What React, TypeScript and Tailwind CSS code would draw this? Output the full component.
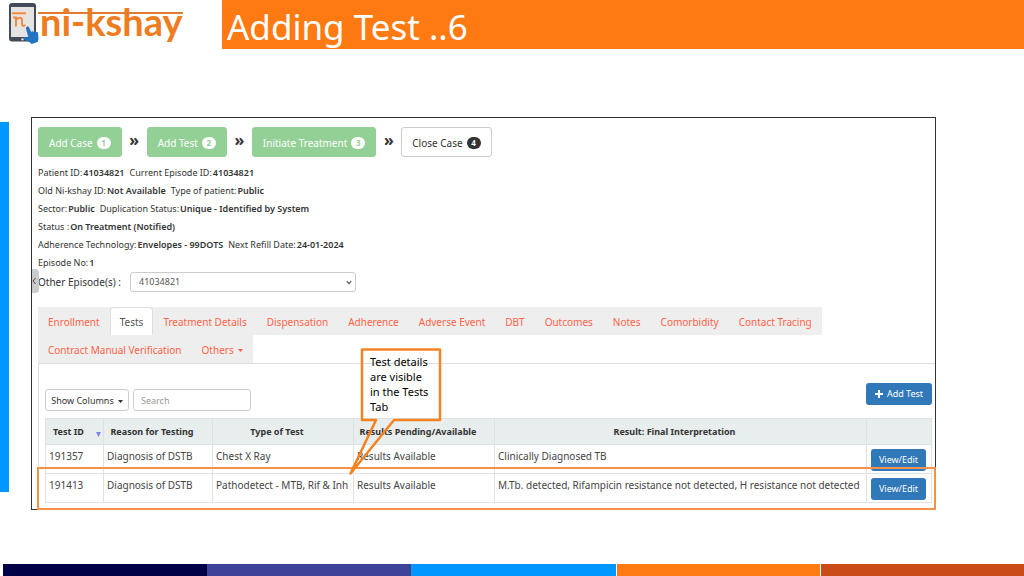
import { ReactNode } from "react";

const steps = [
  { label: "Add Case", n: 1, done: true },
  { label: "Add Test", n: 2, done: true },
  { label: "Initiate Treatment", n: 3, done: true },
  { label: "Close Case", n: 4, done: false },
];

const details = [
  [["Patient ID:", "41034821"], ["Current Episode ID:", "41034821"]],
  [["Old Ni-kshay ID:", "Not Available"], ["Type of patient:", "Public"]],
  [["Sector:", "Public"], ["Duplication Status:", "Unique - Identified by System"]],
  [["Status :", "On Treatment (Notified)"]],
  [["Adherence Technology:", "Envelopes - 99DOTS"], ["Next Refill Date:", "24-01-2024"]],
  [["Episode No:", "1"]],
];

const tabs = [
  "Enrollment",
  "Tests",
  "Treatment Details",
  "Dispensation",
  "Adherence",
  "Adverse Event",
  "DBT",
  "Outcomes",
  "Notes",
  "Comorbidity",
  "Contact Tracing",
  "Contract Manual Verification",
  "Others",
];

const rows = [
  ["191357", "Diagnosis of DSTB", "Chest X Ray", "Results Available", "Clinically Diagnosed TB"],
  [
    "191413",
    "Diagnosis of DSTB",
    "Pathodetect - MTB, Rif & Inh",
    "Results Available",
    "M.Tb. detected, Rifampicin resistance not detected, H resistance not detected",
  ],
];

function Caret() {
  return (
    <svg className="ml-1 inline-block" width="5" height="3" viewBox="0 0 5 3" aria-hidden="true">
      <path d="M0 0h5L2.5 3z" fill="currentColor" />
    </svg>
  );
}

function Logo() {
  return (
    <div className="relative flex h-12 w-[222px] shrink-0 pl-2">
      <svg width="32" height="46" viewBox="0 0 32 46" aria-hidden="true">
        <rect x="1" y="3" width="27" height="38.500" rx="3" fill="#424b57" />
        <rect x="3" y="7" width="23" height="30" fill="#e6e4e2" />
        <circle cx="14.500" cy="39.300" r="1.200" fill="#d8dade" />
        <path
          d="M4 13.300h14M5 17.500h3v9M8 20c2-3 6-3 6 0v4c0 2 1.500 2.500 3.500 1"
          fill="none"
          stroke="#f58a3c"
          strokeWidth="2"
        />
        <path
          d="M18.500 27c1-.9 2.300-.3 2.700.7l2 4.300c.5-1.200 2-1.100 2.500-.1.700-.8 1.800-.5 2.300.3.900-.5 1.800 0 2 1l.4 4.500c.1 2-.2 3.200-.9 4.300l-5.800 2-2.200-1.700-5.500-3c-1.300-1 0-2.600 1.500-2.200l3.100.8-2.700-9.300c-.2-.7 0-1.200.6-1.600z"
          fill="#2374c4"
        />
      </svg>
      <span className="font-[Lato] text-[38px] font-bold leading-[42px] text-[#ee7d22]">ni-kshay</span>
      <span className="absolute left-[38px] top-3 h-[2px] w-[145px] bg-[#e27a30]" />
    </div>
  );
}

function BlueButton({ children, className }: { children: ReactNode; className: string }) {
  return (
    <button className={`items-center justify-center rounded-[3px] bg-[#3078b7] text-[9px] text-white ${className}`}>
      {children}
    </button>
  );
}

export default function App() {
  return (
    <div className="flex min-h-screen flex-col bg-white font-['Noto_Sans',sans-serif] text-[#333]">
      <header className="flex h-[49px]">
        <Logo />
        <h1 className="flex-1 bg-[#ff7a12] pl-[5px] pt-1 text-[35px] leading-[46px] text-white">Adding Test ..6</h1>
      </header>

      <main className="flex pr-[88px] pt-[68px]">
        <div className="mb-[18px] mr-[22px] mt-[5px] w-[9px] shrink-0 bg-[#0098fe]" />
        <section className="relative min-w-0 flex-1 border border-[#333] pl-[6px] pt-[9px]">
          <nav className="flex items-center" aria-label="Case steps">
            {steps.map((s, i) => (
              <div key={s.label} className="flex items-center">
                {i > 0 && <span className="w-[25px] pb-1 text-center text-[16px] font-bold leading-5">»</span>}
                <button
                  className={`flex h-[30px] items-center gap-1 rounded-[3px] border px-[10px] pt-[2px] text-[10px] ${
                    s.done ? "border-[#92d095] bg-[#92d095] text-white" : "border-[#ccc] bg-white text-[#333]"
                  }`}
                >
                  {s.label}
                  <span
                    className={`flex h-3 w-[14px] items-center justify-center rounded-full text-[8px] font-bold ${
                      s.done ? "bg-white text-[#92d095]" : "bg-[#333] text-white"
                    }`}
                  >
                    {s.n}
                  </span>
                </button>
              </div>
            ))}
          </nav>

          <dl className="mt-[7px] text-[9px] leading-[18px]">
            {details.map((line) => (
              <div key={line[0][0]} className="flex gap-[5px]">
                {line.map(([k, v]) => (
                  <div key={k} className="flex gap-px">
                    <dt>{k}</dt>
                    <dd className="font-semibold">{v}</dd>
                  </div>
                ))}
              </div>
            ))}
          </dl>

          <div className="flex h-5 items-center text-[10px]">
            <label htmlFor="episode" className="w-[92px]">
              Other Episode(s) :
            </label>
            <div className="relative flex">
              <select
                id="episode"
                className="h-5 w-[226px] appearance-none rounded-[3px] border border-[#ccc] bg-white pl-2 text-[9px] text-[#555]"
              >
                <option>41034821</option>
              </select>
              <svg className="pointer-events-none absolute right-1 top-2" width="6" height="5" viewBox="0 0 6 5" aria-hidden="true">
                <path d="M.7 1 3 3.600 5.300 1" fill="none" stroke="#444" strokeWidth="1.100" />
              </svg>
            </div>
          </div>
          <button
            aria-label="Collapse"
            className="absolute left-0 top-[151px] flex h-6 w-[7px] items-center justify-start rounded-r-sm bg-[#ccc]"
          >
            <svg width="4" height="8" viewBox="0 0 4 8" aria-hidden="true">
              <path d="M3.500 1 1 4l2.500 3" fill="none" stroke="#444" />
            </svg>
          </button>

          <ul className="mt-[15px] flex flex-wrap text-[10px]">
            {tabs.map((t) => (
              <li key={t} className="h-7 bg-[#eee]">
                <a
                  href="#"
                  className={`flex h-full items-center border px-[9px] pt-[2px] ${
                    t === "Tests" ? "rounded-t-sm border-[#ddd] border-b-white bg-white text-[#555]" : "border-transparent text-[#ff6347]"
                  }`}
                >
                  {t}
                  {t === "Others" && <Caret />}
                </a>
              </li>
            ))}
          </ul>

          <div className="border-l border-t border-[#ddd] pb-[6px] pl-[6px] pr-[3px] pt-[19px]">
            <div className="flex items-start">
              <button className="mt-[6px] h-[22px] w-[84px] rounded-[3px] border border-[#ccc] bg-white pt-[2px] text-[9px]">
                Show Columns
                <Caret />
              </button>
              <input
                aria-label="Search"
                placeholder="Search"
                className="ml-1 mt-[6px] h-[22px] w-[118px] rounded-[3px] border border-[#ccc] px-[7px] text-[9px] placeholder:text-[#999]"
              />
              <BlueButton className="ml-auto flex h-[22px] w-[66px] gap-1">
                <svg width="8" height="8" viewBox="0 0 8 8" aria-hidden="true">
                  <path d="M4 0v8M0 4h8" stroke="white" strokeWidth="2" />
                </svg>
                Add Test
              </BlueButton>
            </div>

            <table className="mt-[7px] w-full table-fixed border-collapse text-[10px] text-[#444]">
              <colgroup>
                <col className="w-[58px]" />
                <col className="w-[109px]" />
                <col className="w-[141px]" />
                <col className="w-[141px]" />
                <col />
                <col className="w-[65px]" />
              </colgroup>
              <thead>
                <tr className="h-[26px] bg-[#e8eded] text-[9px] text-[#333]">
                  <th className="whitespace-nowrap border border-[#dde1e3] pl-[7px] pt-px text-left">
                    <span className="flex items-center gap-3">
                      Test ID
                      <svg width="5" height="5" viewBox="0 0 5 5" className="mt-1" aria-hidden="true">
                        <path d="M0 0h5L2.500 5z" fill="#8080ee" />
                      </svg>
                    </span>
                  </th>
                  <th className="border border-[#dde1e3] pr-3 pt-px">Reason for Testing</th>
                  <th className="border border-[#dde1e3] pr-3 pt-px">Type of Test</th>
                  <th className="whitespace-nowrap border border-[#dde1e3] pr-3 pt-px">Results Pending/Available</th>
                  <th className="border border-[#dde1e3] pr-3 pt-px">Result: Final Interpretation</th>
                  <th className="border border-[#dde1e3]" aria-label="Actions" />
                </tr>
              </thead>
              <tbody>
                {rows.map((r) => (
                  <tr key={r[0]} className="h-[29px]">
                    {r.map((c, i) => (
                      <td key={i} className="whitespace-nowrap border border-[#e2e2e2] pb-[5px] pl-[3px]">
                        {c}
                      </td>
                    ))}
                    <td className="border border-[#e2e2e2] pl-1 pt-[2px]">
                      <BlueButton className="flex h-[22px] w-[55px]">View/Edit</BlueButton>
                    </td>
                  </tr>
                ))}
              </tbody>
            </table>
          </div>

          <div className="pointer-events-none absolute -bottom-px -right-px left-[5px] h-[43px] border-2 border-[#f79048]" />
          <div className="absolute left-[329px] top-[230px] w-[80px] pl-[9px] pr-[9px] pt-[6px] text-[11px] leading-[15px] text-black">
            Test details are visible in the Tests Tab
            <svg className="absolute -left-3 top-0" width="94" height="128" viewBox="0 0 94 128" aria-hidden="true">
              <path d="M13 1.500H91V72H45L1.500 125.500 27 72H13Z" fill="none" stroke="#f58220" strokeWidth="2.500" strokeLinejoin="round" />
            </svg>
          </div>
        </section>
      </main>

      <footer className="mt-auto grid h-3 grid-cols-5 pl-[3px]">
        <div className="bg-[#000046]" />
        <div className="bg-[#3f4299]" />
        <div className="bg-[#0098fe]" />
        <div className="border-l border-white bg-[#ff7a12]" />
        <div className="border-l border-white bg-[#cb4b16]" />
      </footer>
    </div>
  );
}
